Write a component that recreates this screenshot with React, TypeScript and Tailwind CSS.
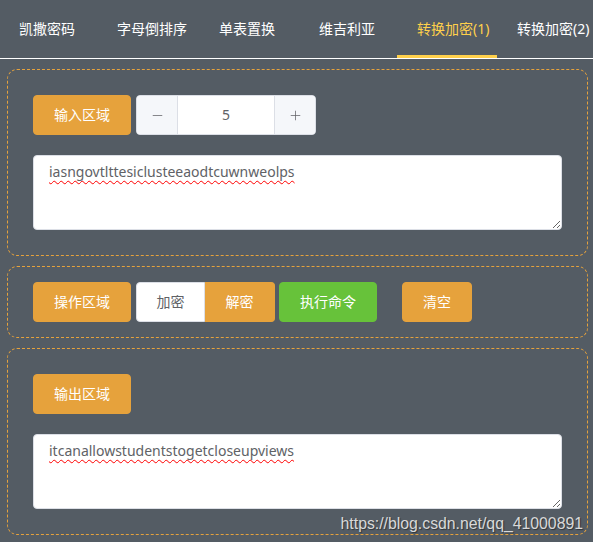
import React, { useState } from 'react';
import { Minus, Plus } from 'lucide-react';

const tabs = [
  { label: '凯撒密码', w: 'w-[98px]' },
  { label: '字母倒排序', w: 'w-[102px]' },
  { label: '单表置换', w: 'w-[100px]' },
  { label: '维吉利亚', w: 'w-[98px]' },
  { label: '转换加密(1)', w: 'w-[100px]' },
  { label: '转换加密(2)', w: 'w-[100px]' },
];

const OrangeBtn: React.FC<{ children: React.ReactNode; className?: string; onClick?: () => void }> = ({ children, className, onClick }) => (
  <button
    onClick={onClick}
    className={`h-10 px-5 rounded-[4px] bg-[#e6a23c] border border-[#e6a23c] text-white text-sm leading-none ${className || ''}`}
  >
    {children}
  </button>
);

const areaCls =
  'mt-[20px] block w-full h-[75px] bg-white border border-[#dcdfe6] rounded-[4px] px-[15px] py-[5px] text-sm leading-[21px] text-[#606266] underline decoration-wavy decoration-[#ff0000] decoration-1 underline-offset-[3px] outline-none';

const App: React.FC = () => {
  const [active, setActive] = useState(4);
  const [key, setKey] = useState(5);
  const [mode, setMode] = useState<'enc' | 'dec'>('dec');
  const [input, setInput] = useState('iasngovtlttesiclusteeaodtcuwnweolps');
  const [output, setOutput] = useState('itcanallowstudentstogetcloseupviews');

  const font = { fontFamily: '"Noto Sans", "Noto Sans CJK SC", sans-serif' };

  return (
    <div className="relative min-h-[542px] w-[593px] bg-[#545c64] overflow-hidden" style={font}>
      {/* Tabs */}
      <div className="flex h-[59px] border-b border-white ml-[-1px]">
        {tabs.map((t, i) => (
          <div
            key={t.label}
            onClick={() => setActive(i)}
            className={`${t.w} shrink-0 h-[58px] pl-5 flex items-center whitespace-nowrap text-sm cursor-pointer border-b-[3px] ${
              active === i ? 'text-[#ffd04b] border-[#ffd04b]' : 'text-white border-transparent'
            }`}
          >
            <span className="pt-[2px]">{t.label}</span>
          </div>
        ))}
      </div>

      <div className="pl-[7px] pr-[5px] pt-[10px] flex flex-col gap-[10px]">
        {/* Input panel */}
        <div className="border border-dashed border-[#e6a23c] rounded-[10px] px-[25px] pt-[25px] pb-[25px]">
          <div className="flex items-center gap-[5px]">
            <OrangeBtn>输入区域</OrangeBtn>
            <div className="flex h-10 w-[180px] border border-[#dcdfe6] rounded-[4px] bg-white overflow-hidden">
              <button
                onClick={() => setKey(k => k - 1)}
                className="w-[41px] shrink-0 bg-[#f5f7fa] border-r border-[#dcdfe6] flex items-center justify-center text-[#606266]"
              >
                <Minus size={15} strokeWidth={1.2} />
              </button>
              <div className="flex-1 flex items-center justify-center text-sm text-[#606266]">{key}</div>
              <button
                onClick={() => setKey(k => k + 1)}
                className="w-[41px] shrink-0 bg-[#f5f7fa] border-l border-[#dcdfe6] flex items-center justify-center text-[#606266]"
              >
                <Plus size={15} strokeWidth={1.2} />
              </button>
            </div>
          </div>
          <textarea value={input} onChange={e => setInput(e.target.value)} className={areaCls} />
        </div>

        {/* Operation panel */}
        <div className="border border-dashed border-[#e6a23c] rounded-[10px] px-[25px] py-[15px]">
          <div className="flex items-center">
            <OrangeBtn>操作区域</OrangeBtn>
            <div className="flex h-10 ml-[5px]">
              <button
                onClick={() => setMode('enc')}
                className={`w-[69px] h-10 text-sm rounded-l-[4px] border ${
                  mode === 'enc' ? 'bg-[#e6a23c] border-[#e6a23c] text-white' : 'bg-white border-[#dcdfe6] text-[#606266]'
                }`}
              >
                加密
              </button>
              <button
                onClick={() => setMode('dec')}
                className={`w-[70px] h-10 text-sm rounded-r-[4px] border border-l-0 ${
                  mode === 'dec' ? 'bg-[#e6a23c] border-[#e6a23c] text-white' : 'bg-white border-[#dcdfe6] text-[#606266]'
                }`}
              >
                解密
              </button>
            </div>
            <button className="ml-[4px] h-10 w-[98px] rounded-[4px] bg-[#67c23a] border border-[#67c23a] text-white text-sm">
              执行命令
            </button>
            <OrangeBtn
              className="ml-[25px] w-[70px] px-0"
              onClick={() => {
                setInput('');
                setOutput('');
              }}
            >
              清空
            </OrangeBtn>
          </div>
        </div>

        {/* Output panel */}
        <div className="border border-dashed border-[#e6a23c] rounded-[10px] px-[25px] pt-[25px] pb-[25px]">
          <OrangeBtn>输出区域</OrangeBtn>
          <textarea value={output} onChange={e => setOutput(e.target.value)} className={areaCls} />
        </div>
      </div>

      {/* watermark */}
      <div
        className="absolute right-[10px] bottom-[10px] text-[15.8px] text-[#d9d9d9] leading-none [text-shadow:1px_1px_1px_rgba(0,0,0,0.45)]"
        style={{ fontFamily: '"Liberation Sans", Arial, sans-serif' }}
      >
        https://blog.csdn.net/qq_41000891
      </div>
    </div>
  );
};

export default App;
